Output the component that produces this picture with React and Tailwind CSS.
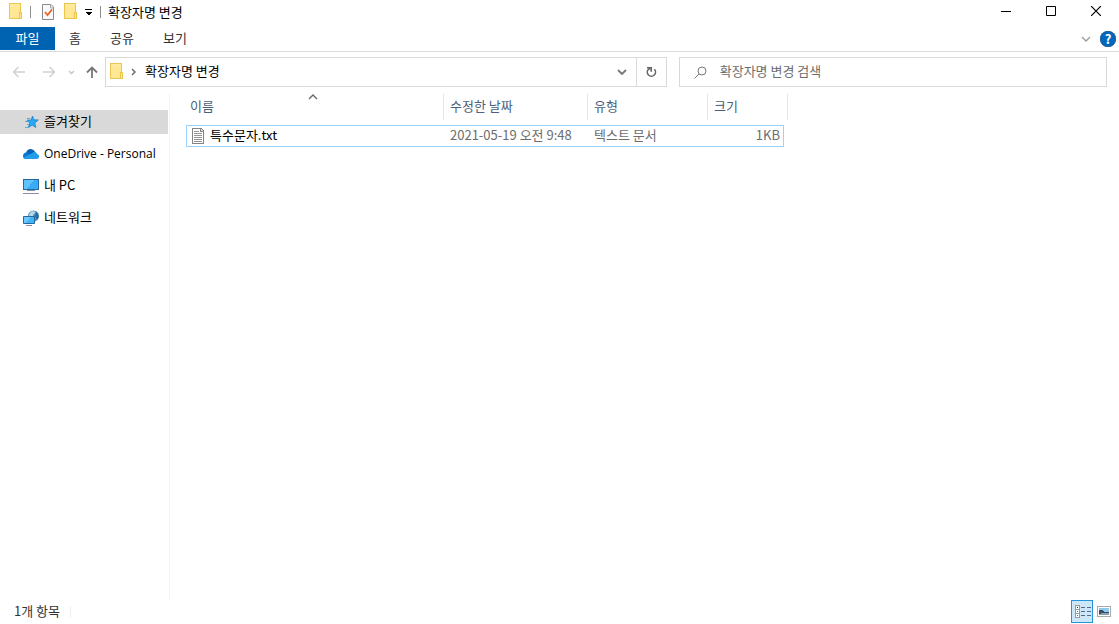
import React, { useState } from "react"

const files = [
  { name: "특수문자.txt", date: "2021-05-19 오전 9:48", type: "텍스트 문서", size: "1KB" },
]

const FolderIcon = () => (
  <svg width="14" height="18" viewBox="0 0 14 18" shapeRendering="crispEdges" className="shrink-0">
    <path d="M0 0h12v16H0z" fill="#eac64f" />
    <path d="M1 1h10v14H1z" fill="#ffe793" />
    <path d="M1 1h10v3H1z" fill="#ffeaa0" />
    <path d="M10 9h3v7h-3z" fill="#eac64f" />
    <path d="M11 10h1v5h-1z" fill="#ffe793" />
  </svg>
)

const CheckPageIcon = () => (
  <svg width="14" height="18" viewBox="0 0 14 18" className="shrink-0">
    <path d="M.5 1.500H9L11.500 4v12.500H.5z" fill="#f7f9fc" stroke="#8a8a8a" />
    <path d="M8.500 1.500V5h3" fill="none" stroke="#a5a5a5" />
    <path d="M3 9l2.500 3 4.500-5.500" fill="none" stroke="#ec6420" strokeWidth="1.800" />
  </svg>
)

const StarIcon = () => (
  <svg width="16" height="16" viewBox="0 0 16 16" className="shrink-0">
    <path d="M9.500 2l1.300 3.800 4.500.1-3.500 3 1 4.600-3.700-2.500-3.700 2.700 1.300-4.600L4 6.200l4.200-.2z" fill="#2ba7f3" stroke="#1683d0" strokeWidth=".8" />
    <path d="M4 4.500h3M2 7.500h3M4 10.500h2M2 13.500h4" stroke="#62a9d6" />
  </svg>
)

const CloudIcon = () => (
  <svg width="16" height="16" viewBox="0 0 16 16" className="shrink-0">
    <path d="M3 7C4 2.500 9.500 1.400 12 5.800L13.500 8 6 12z" fill="#0864b8" />
    <path d="M0 10c0-2.500 2-4 4.400-3.400L10 13H3C1.200 13 0 11.800 0 10z" fill="#0878d1" />
    <path d="M9 7.200c2-2 4.500-1 5 .8 2.800.4 2.700 5-.2 5H3c-1.200 0-2-.5-2.500-1.400z" fill="#229ee9" />
  </svg>
)

const PcIcon = () => (
  <svg width="16" height="16" viewBox="0 0 16 16" shapeRendering="crispEdges" className="shrink-0">
    <path d="M0 1h16v11H0z" fill="#26689b" />
    <path d="M1 2h14v9H1z" fill="#38adf7" />
    <path d="M1 2h10l-7 9H1z" fill="#60c3fc" />
    <path d="M4 12h8v1H4zM0 15h16v1H0z" fill="#8d8da8" />
  </svg>
)

const NetworkIcon = () => (
  <svg width="16" height="16" viewBox="0 0 16 16" className="shrink-0">
    <circle cx="10.500" cy="6" r="5.500" fill="#4d91bd" />
    <path d="M6.500 3.500c2-3 5-2.500 6-1l-2 2-1.500 3-3-1z" fill="#b6d8e9" />
    <path d="M13 2c3 2 3.500 6 1 8l-2-4z" fill="#286b9d" />
    <path d="M.5 6.500h11v7H.5z" fill="#43b4f8" stroke="#26689b" />
    <path d="M1 7h7l-5 6H1z" fill="#6bc9fd" />
    <path d="M3 15.500h6" stroke="#8d8da8" />
  </svg>
)

const TextFileIcon = () => (
  <svg width="14" height="16" viewBox="0 0 14 16" shapeRendering="crispEdges" className="shrink-0">
    <path d="M1 0h9l3 3v13H1z" fill="#858585" />
    <path d="M2 1h7v3h3v11H2z" fill="#fff" />
    <path d="M10 1h1v1h1v1h-2z" fill="#ddd" />
    <path d="M3 3h5v1H3zM3 5h8v1H3zM3 7h8v1H3zM3 9h8v1H3zM3 11h8v1H3zM3 13h8v1H3z" fill="#949494" />
  </svg>
)

const Chevron = ({ className }) => (
  <svg width="10" height="6" viewBox="0 0 10 6" fill="none" stroke="currentColor" strokeWidth="1.300" className={className}>
    <path d="M1 1l4 4 4-4" />
  </svg>
)

const Arrow = ({ className }) => (
  <svg width="14" height="12" viewBox="0 0 14 12" fill="none" stroke="currentColor" strokeWidth="1.400" className={className}>
    <path d="M13 6H1.500M6.500 1L1.500 6l5 5" />
  </svg>
)

const places = [
  { label: "즐겨찾기", Icon: StarIcon },
  { label: "OneDrive - Personal", Icon: CloudIcon, latin: true },
  { label: "내 PC", Icon: PcIcon },
  { label: "네트워크", Icon: NetworkIcon },
]

const TitleBar = () => (
  <header className="flex h-[27px] items-start justify-between">
    <div className="flex h-6 items-center pl-[9px]">
      <FolderIcon />
      <span className="ml-[7px] h-3 w-px bg-[#8c8c8c]" />
      <button aria-label="속성" className="ml-[11px]">
        <CheckPageIcon />
      </button>
      <button aria-label="새 폴더" className="ml-2">
        <FolderIcon />
      </button>
      <button aria-label="빠른 실행 도구 모음 사용자 지정" className="ml-[7px]">
        <svg width="8" height="8" viewBox="0 0 8 8" shapeRendering="crispEdges">
          <path d="M0 1h7v1H0zM1 4h6v1H6v1H5v1H3V6H2V5H1z" />
        </svg>
      </button>
      <span className="ml-[7px] h-3 w-px bg-[#8c8c8c]" />
      <h1 className="ml-[7px] leading-[22px]">확장자명 변경</h1>
    </div>
    <div className="flex">
      <button aria-label="최소화" className="flex h-[22px] w-[46px] items-center justify-center">
        <svg width="10" height="10" viewBox="0 0 10 10" shapeRendering="crispEdges">
          <path d="M0 5h10v1H0z" />
        </svg>
      </button>
      <button aria-label="최대화" className="flex h-[22px] w-11 items-center justify-center">
        <svg width="10" height="10" viewBox="0 0 10 10" fill="none" stroke="#000">
          <path d="M.5.5h9v9h-9z" />
        </svg>
      </button>
      <button aria-label="닫기" className="flex h-[22px] w-[46px] items-center justify-center">
        <svg width="10" height="10" viewBox="0 0 10 10" fill="none" stroke="#000" strokeWidth="1.200">
          <path d="M0 0l10 10M10 0L0 10" />
        </svg>
      </button>
    </div>
  </header>
)

const Ribbon = () => (
  <nav className="flex h-[25px] items-start justify-between border-b border-[#dadbdc] text-[#333]">
    <div className="flex h-[23px]">
      <button className="w-[55px] bg-[#0063b1] pb-0.5 text-white">파일</button>
      <button className="w-10 pb-0.5">홈</button>
      <button className="w-[54px] pb-0.5">공유</button>
      <button className="w-[52px] pb-0.5">보기</button>
    </div>
    <div className="flex h-6 items-center gap-[9px] pr-[3px]">
      <button aria-label="리본 확장">
        <Chevron className="text-[#999]" />
      </button>
      <button
        aria-label="도움말"
        className="flex size-4 items-center justify-center rounded-full bg-[#0067be] text-[13px] leading-4 font-bold text-white ring-1 ring-[#1f5f99] ring-inset"
      >
        ?
      </button>
    </div>
  </nav>
)

const AddressBar = () => (
  <div className="flex items-center px-3 pt-[5px]">
    <div className="flex w-[93px] items-center">
      <button aria-label="뒤로">
        <Arrow className="text-[#cfcfcf]" />
      </button>
      <button aria-label="앞으로" className="ml-4">
        <Arrow className="rotate-180 text-[#cfcfcf]" />
      </button>
      <button aria-label="최근 위치" className="ml-3">
        <svg width="7" height="5" viewBox="0 0 7 5" fill="none" stroke="#c4c4c4" strokeWidth="1.400">
          <path d="M1 1l2.500 2.500L6 1" />
        </svg>
      </button>
      <button aria-label="위로" className="ml-[11px]">
        <svg width="12" height="14" viewBox="0 0 12 14" fill="none" stroke="#777" strokeWidth="1.800">
          <path d="M6 13V3M1 7.500l5-5 5 5" />
        </svg>
      </button>
    </div>
    <div className="flex h-[30px] flex-[562] items-center border border-[#d9d9d9]">
      <span className="pl-1">
        <FolderIcon />
      </span>
      <svg width="5" height="8" viewBox="0 0 5 8" fill="none" stroke="#666" strokeWidth="1.400" className="ml-[7px]">
        <path d="M1 1l3 3-3 3" />
      </svg>
      <button className="ml-[9px] pb-0.5">확장자명 변경</button>
      <button aria-label="이전 위치" className="ml-auto flex h-full w-7 items-center justify-center">
        <svg width="10" height="7" viewBox="0 0 10 7" fill="none" stroke="#777" strokeWidth="1.800">
          <path d="M1 1l4 4 4-4" />
        </svg>
      </button>
      <button aria-label="새로 고침" className="flex h-full w-[30px] items-center justify-center border-l border-[#d9d9d9]">
        <svg width="12" height="12" viewBox="0 0 12 12" fill="none" stroke="#666" strokeWidth="1.600">
          <path d="M9.300 3.200A4.100 4.100 0 1 1 3.500 3.200L5.500 2.200" />
          <path d="M2 1.800h4.200v4" />
        </svg>
      </button>
    </div>
    <label className="ml-3 flex h-[30px] flex-[428] items-center border border-[#d9d9d9]">
      <svg width="13" height="13" viewBox="0 0 13 13" fill="none" stroke="#777" className="ml-[14px] shrink-0">
        <circle cx="8" cy="5" r="4" />
        <path d="M5 8l-4.500 4.500" />
      </svg>
      <input
        type="search"
        aria-label="검색"
        placeholder="확장자명 변경 검색"
        className="ml-[13px] min-w-0 flex-1 pb-0.5 outline-none placeholder:text-[#6d6d6d]"
      />
    </label>
  </div>
)

const Sidebar = ({ active, onSelect }) => (
  <aside className="w-[170px] shrink-0 border-r border-[#f4f4f4] pt-4">
    <ul className="space-y-2">
      {places.map(({ label, Icon, latin }) => (
        <li key={label}>
          <button
            onClick={() => onSelect(label)}
            className={`flex h-6 w-[168px] items-center gap-[5px] pl-[23px] ${active === label ? "bg-[#d9d9d9]" : ""}`}
          >
            <Icon />
            <span className={latin ? "font-['Open_Sans',sans-serif] text-xs" : "pb-0.5"}>{label}</span>
          </button>
        </li>
      ))}
    </ul>
  </aside>
)

const FileList = () => (
  <table className="w-[602px] table-fixed border-separate border-spacing-0 self-start text-left">
    <colgroup>
      <col className="w-[258px]" />
      <col className="w-[144px]" />
      <col className="w-[120px]" />
      <col className="w-[76px]" />
      <col className="w-1" />
    </colgroup>
    <thead className="text-[#4c607a]">
      <tr className="h-[26px]">
        <th className="relative border-r border-[#e5e5e5] p-0 pb-0.5 pl-1 font-normal">
          이름
          <Chevron className="absolute top-0 left-[122px] rotate-180 text-[#666]" />
        </th>
        <th className="border-r border-[#e5e5e5] p-0 pb-0.5 pl-[6px] font-normal">수정한 날짜</th>
        <th className="border-r border-[#e5e5e5] p-0 pb-0.5 pl-[6px] font-normal">유형</th>
        <th colSpan={2} className="border-r border-[#e5e5e5] p-0 pb-0.5 pl-[6px] font-normal">크기</th>
      </tr>
      <tr className="h-[5px]" />
    </thead>
    <tbody className="text-[#6d6d6d]">
      {files.map((file) => (
        <tr key={file.name} className="h-[22px]">
          <td className="border-y border-l border-[#99d1ff] p-0 pl-1 text-black">
            <div className="flex items-center gap-[5px]">
              <TextFileIcon />
              <span className="pb-0.5">{file.name}</span>
            </div>
          </td>
          <td className="border-y border-[#99d1ff] p-0 pb-0.5 pl-[6px]">{file.date}</td>
          <td className="border-y border-[#99d1ff] p-0 pb-0.5 pl-[6px]">{file.type}</td>
          <td className="border-y border-r border-[#99d1ff] p-0 pr-[3px] pb-0.5 text-right">{file.size}</td>
          <td className="p-0" />
        </tr>
      ))}
    </tbody>
  </table>
)

const StatusBar = () => (
  <footer className="flex h-6 items-start justify-between pr-[7px] pl-[14px] text-[#333]">
    <div className="flex h-[23px] items-center">
      <span className="pb-0.5">{files.length}개 항목</span>
      <span className="ml-[10px] h-3 w-px bg-[#f0f0f0]" />
    </div>
    <div className="flex items-center gap-1">
      <button aria-label="자세히" className="flex h-[23px] w-[22px] items-center justify-center border border-[#2494dc] bg-[#cce8f8]">
        <svg width="18" height="15" viewBox="0 0 18 15" shapeRendering="crispEdges">
          <path d="M2 1h5v13H2z" fill="#999" />
          <path d="M3 2h3v3H3zM3 6h3v3H3zM3 10h3v3H3z" fill="#fff" />
          <path d="M4 3h1v1H4z" fill="#333" />
          <path d="M4 7h1v1H4z" fill="#2f7fc4" />
          <path d="M4 11h1v1H4z" fill="#b3402e" />
          <path d="M8 3h4v1H8zM14 3h4v1h-4zM8 7h4v1H8zM14 7h4v1h-4zM8 11h4v1H8zM14 11h4v1h-4z" fill="#5b6885" />
        </svg>
      </button>
      <button aria-label="큰 아이콘">
        <svg width="15" height="11" viewBox="0 0 15 11" shapeRendering="crispEdges">
          <path d="M0 0h14v11H0z" fill="#aaa" />
          <path d="M1 1h12v9H1z" fill="#fff" />
          <path d="M2 2h10v7H2z" fill="#8fc9ef" />
          <path d="M2 4h3l3 2h4v3H2z" fill="#3b4d60" />
          <path d="M5 7h7v2H2V8z" fill="#8a9fac" />
        </svg>
      </button>
    </div>
  </footer>
)

const App = () => {
  const [active, setActive] = useState("즐겨찾기")

  return (
    <div className="flex min-h-screen flex-col bg-white font-['Noto_Sans_CJK_KR',sans-serif] text-[13px] leading-[18px] text-black">
      <TitleBar />
      <Ribbon />
      <AddressBar />
      <main className="flex flex-1 pt-[7px]">
        <Sidebar active={active} onSelect={setActive} />
        <div className="pl-4">
          <FileList />
        </div>
      </main>
      <StatusBar />
    </div>
  )
}

export default App
